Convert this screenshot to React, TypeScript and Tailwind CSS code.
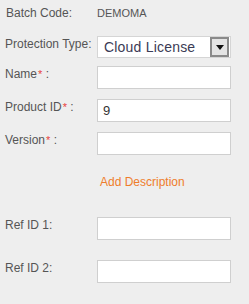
import React from 'react'

const Req = () => <span className="text-[#e8413c] text-[11px] leading-[10px] ml-[1px]">*</span>

const Field = ({ label, children, className = '' }: { label: React.ReactNode; children: React.ReactNode; className?: string }) => (
  <div className={`flex items-start ${className}`}>
    <div className="w-[97px] shrink-0 pl-[5px] pt-[1px] leading-[14px] text-[12px] text-[#555]">{label}</div>
    {children}
  </div>
)

const Input = ({ value }: { value?: string }) => (
  <input
    defaultValue={value}
    className="w-[134px] h-[23px] bg-white border border-[#cfcfcf] px-[5px] text-[13px] text-[#333] outline-none"
    style={{ fontFamily: '"Liberation Sans", Arial, sans-serif' }}
  />
)

export default function App() {
  return (
    <div
      className="w-[249px] h-[304px] bg-[#eeeeee] pt-[6px]"
      style={{ fontFamily: '"Liberation Sans", Arial, sans-serif' }}
    >
      <div className="flex items-center h-[14px]">
        <div className="w-[97px] pl-[6px] text-[12px] text-[#555]">Batch Code:</div>
        <div className="text-[11px] text-[#555]">DEMOMA</div>
      </div>

      <Field label="Protection Type:" className="mt-[16px]">
        <div className="w-[134px] h-[22px] bg-white border border-[#d5d5d5] flex items-center justify-between pl-[6px] pr-[1px]">
          <span className="text-[14px] text-[#3b3b55] tracking-[0.2px]">Cloud License</span>
          <span className="w-[19px] h-[20px] border-2 border-[#8a8a8a] bg-[#e4e4e4] flex items-center justify-center">
            <svg width="8" height="5" viewBox="0 0 8 5"><path d="M0 0h8L4 5z" fill="#111" /></svg>
          </span>
        </div>
      </Field>

      <Field label={<>Name<Req /> :</>} className="mt-[8px]">
        <Input />
      </Field>

      <Field label={<>Product ID<Req /> :</>} className="mt-[10px]">
        <Input value="9" />
      </Field>

      <Field label={<>Version<Req /> :</>} className="mt-[10px]">
        <Input />
      </Field>

      <div className="mt-[20px] pl-[100px] text-[12px] leading-[14px] text-[#ee7d2c]">Add Description</div>

      <Field label="Ref ID 1:" className="mt-[28px]">
        <Input />
      </Field>

      <Field label="Ref ID 2:" className="mt-[20px]">
        <Input />
      </Field>
    </div>
  )
}
